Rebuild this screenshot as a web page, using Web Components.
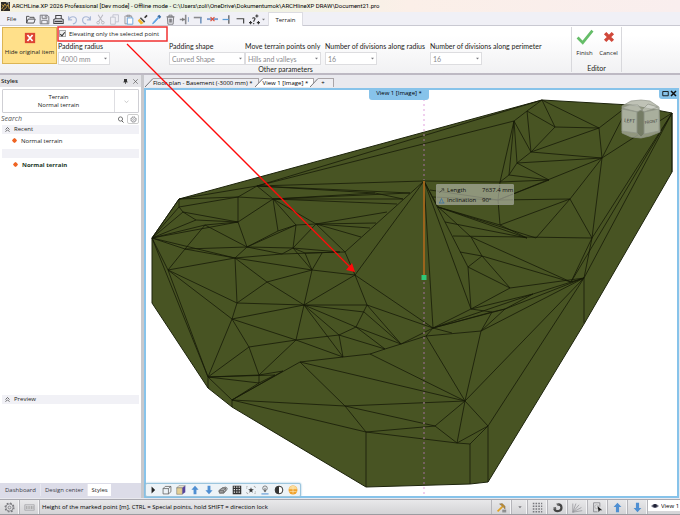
<!DOCTYPE html>
<html lang="en">
<head>
<meta charset="utf-8">
<title>ARCHLine.XP 2026 Professional</title>
<style>
html,body{margin:0;height:100%}
body{font:6px/10px "Open Sans","Noto Sans",sans-serif;color:#1c1c20;background:#e9e9ee;display:flex;flex-direction:column}
</style>
</head>
<body>
<app-window></app-window>
<script>
const BASE = `*{box-sizing:border-box}
button,select,input{font:inherit;color:inherit;margin:0;padding:0;border:0;background:none;border-radius:0;outline:0}
button{cursor:pointer}svg{display:block}`;

function define(name, css, html, after) {
  const t = document.createElement('template');
  t.innerHTML = `<style>${BASE}${css}</style>${html}`;
  customElements.define(name, class extends HTMLElement {
    constructor() {
      super();
      this.attachShadow({mode: 'open'}).append(t.content.cloneNode(true));
    }
    connectedCallback() { if (after) after(this, this.shadowRoot); }
  });
}

const S = (c, w = 1) => `fill="none" stroke="${c}" stroke-width="${w}"`;
const ARROW_UP = '<path d="M7 1 12 6.5H9V13H5V6.5H2Z" fill="#4f8fd2"/>';
const ICONS = {
  logo: '<rect width="14" height="14" fill="#2d2b28"/><path d="M1 11 6 3l3 4 2-3 2 7M1 4l4 3M3 13l6-5" fill="none" stroke="#c39a43" stroke-width="1.5"/><path d="M8 1h4v3" fill="none" stroke="#eee"/>',
  open: `<path d="M2 11.5V3H5l1 1.2h5.500V6M2 11.500 4 6.500h9L11.300 11.500Z" ${S('#4a4a4e', 1.2)}/>`,
  save: `<path d="M1.500 1.500H10.500L12.500 3.500V12.500H1.500Z" ${S('#77777c', 1.2)}/><path d="M4 1.500V5.500H10V1.500M3.500 12.500V8H10.500V12.500M8 2v2.500" ${S('#77777c', 1.2)}/>`,
  print: `<path d="M3.500 6V2H10.500V6M1 12V7L3 6H11L13 7V12Z" ${S('#444448', 1.3)}/><path d="M2 9.500H12" ${S('#444448', 2)}/>`,
  undo: `<path d="M2 3V7.500H6.500M2.500 7C4 2.500 11.500 2 12 7.500 12 10 10 12 7.500 12.500" ${S('#a9b8d6', 1.5)}/>`,
  redo: `<path d="M12 3V7.500H7.500M11.500 7C10 2.500 2.500 2 2 7.500 2 10 4 12 6.500 12.500" ${S('#a9b8d6', 1.5)}/>`,
  cut: `<path d="M4 1 9.500 10M10 1 4.500 10" ${S('#b9b9c0', 1.3)}/><circle cx="4" cy="11" r="1.700" ${S('#b9b9c0', 1.2)}/><circle cx="10" cy="11" r="1.700" ${S('#b9b9c0', 1.2)}/>`,
  copy: `<path d="M2 4H8V13H2ZM5 4V1H12V10H8" ${S('#c2c5cf', 1.2)}/>`,
  paste: `<path d="M3 2.500H11V6M6 12.500H2.500V2.500M5 1.500H9V3.500H5Z" ${S('#8a8a8e', 1)}/><path d="M5.500 5H12.500V13H5.500Z" fill="#fff" stroke="#6fa8dc" stroke-width="1.200"/>`,
  brush: '<path d="M9 4 12 1 13.500 2.500 10.500 5.500Z" fill="#333"/><path d="M5 4 10.500 9.500 9 11 3.500 5.500Z" fill="#4d4d4d"/><path d="M3 6 8.500 11.500 5 13.500 1 8.500Z" fill="#f0b429"/>',
  pipette: '<path d="M8 3 10.500 1 13 3.500 11 6Z" fill="#3b6ea5"/><path d="M8.500 4.500 9.500 5.500 4 11.500 2 12.500 3 10.500Z" fill="#5aa1e3" stroke="#5aa1e3"/>',
  trash: `<path d="M3 4H11L10.300 13H3.700ZM2 3.500H12M5 3V1.500H9V3M5.500 6V11M7 6V11M8.500 6V11" ${S('#6f6f74', 1.1)}/>`,
  jn1: `<path d="M8.500 1V13M1 7H8.500" ${S('#8a8a8e', 2)}/><path d="M12 4V10" ${S('#6f93bd', 1)}/><path d="M4 4.500 7 7 4 9.500" fill="#777"/>`,
  jn2: `<path d="M1 4.500H11" ${S('#8a8a8e', 2)}/><path d="M10 4V12" ${S('#6f93bd', 2)}/>`,
  jn3: `<path d="M0 6.500H14" ${S('#7d9dcc', 2.4)}/><path d="M4.500 4 9.500 9M9.500 4 4.500 9" ${S('#e0523f', 1.600)}/>`,
  jn4: `<path d="M10 1.500V12.500" ${S('#444', 1.4)}/><path d="M2 7H10" ${S('#5a9bd5', 1.6)}/>`,
  jn5: `<path d="M2 6H11V12" ${S('#444', 1.5)}/>`,
  jn6: `<path d="M8 2.500H12M10 .500V4.500M0 11H4M2 9V13M10 11H14M12 9V13M4.500 6C5 4 8 4.500 7.500 6.500 7 8 6 8 6 10M6 11.500V13" ${S('#333', 1.4)}/>`,
  tri: '<path d="M3 5H11L7 10Z" fill="#77777c"/>',
  hide: '<rect x="1" y="1" width="12" height="12" fill="#dd4433"/><path d="M4 3.500 10 10.500M10 3.500 4 10.500" fill="none" stroke="#fff" stroke-width="2"/>',
  check: '<path d="M.500 7.500 5 12 13.500 1.500" fill="none" stroke="#65bd68" stroke-width="2.400"/>',
  cross: '<path d="M2.500 2.500 11.500 11.500M11.500 2.500 2.500 11.500" fill="none" stroke="#d0483a" stroke-width="4"/>',
  pin: `<path d="M4 2H10V8H4Z" fill="#333"/><path d="M2.500 8H11.500M7 8V12" ${S('#333', 1.4)}/>`,
  close: `<path d="M2.500 2.500 11.500 11.500M11.500 2.500 2.500 11.500" ${S('#555', 1.3)}/>`,
  closeb: `<path d="M2 2 12 12M12 2 2 12" ${S('#111', 3)}/>`,
  maxi: `<path d="M1.500 3H12.500V11.500H1.500Z" ${S('#111', 1.800)}/>`,
  chev: `<path d="M3 5.500 7 9 11 5.500" ${S('#aaa', 1.2)}/>`,
  search: `<circle cx="7" cy="6" r="4.200" ${S('#444', 1.4)}/><path d="M9.500 9.500 13 13" ${S('#444', 1.8)}/>`,
  gear: `<circle cx="7" cy="7" r="4.600" ${S('#77777c', 1)}/><circle cx="7" cy="7" r="1.800" ${S('#77777c', 1)}/><circle cx="7" cy="7" r="5.600" ${S('#77777c', 1.6)} stroke-dasharray="2.200 2.200"/>`,
  fold: `<path d="M3 7 7 3 11 7M3 11.500 7 7.500 11 11.500" ${S('#333', 1.4)}/>`,
  dot: '<path d="M7 0 11 3 14 7 11 11 7 14 3 11 0 7 3 3Z" fill="#ef6423"/>',
  play: '<path d="M5 2 10 7 5 12Z" fill="#222"/>',
  cube: `<path d="M1.500 5H9V12.500H1.500ZM1.500 5 4.500 2H12.500L9 5M12.500 2V9.500L9 12.500" ${S('#555', 1)}/>`,
  box: '<path d="M1 4 4 1H13L9 4Z" fill="#f4efd8" stroke="#555" stroke-width=".600"/><path d="M1 4H9V13H1Z" fill="#e3cf94" stroke="#555" stroke-width=".600"/><path d="M9 4 13 1V10L9 13Z" fill="#55439c"/>',
  up: ARROW_UP,
  down: `<g transform="rotate(180 7 7)">${ARROW_UP}</g>`,
  orbit: `<path d="M2 8 6 4H11L8 8ZM2 8V11.500H8V8M8 11.500 11 8V4" fill="#aaa" stroke="#555"/><ellipse cx="7" cy="7" rx="6.500" ry="3" transform="rotate(-25 7 7)" ${S('#777', 1)}/>`,
  checker: '<path d="M1 1H13V13H1Z" fill="#333"/><path d="M2.500 3H13M2.500 6.500H13M2.500 10H13" stroke="#eee" stroke-width="1.700" stroke-dasharray="1.700 1.700"/>',
  star: '<path d="M7 3 8 6H11L8.500 8 9.500 11 7 9 4.500 11 5.500 8 3 6H6Z" fill="#333"/><path d="M1 5V2H3M11 2H13V5M13 9V12H11M3 12H1V9" fill="none" stroke="#888" stroke-dasharray="1.500 1"/>',
  lamp: `<circle cx="7" cy="4.500" r="3.200" ${S('#555', 1)}/><path d="M7 4V10M5.500 8.500H8.500" ${S('#555', 1.2)}/><path d="M2 12.500H12" ${S('#4f8fd2', 1.400)}/>`,
  contrast: `<circle cx="7" cy="7" r="5.400" fill="#fff" stroke="#333" stroke-width="1.400"/><path d="M7 1.600A5.400 5.400 0 0 0 7 12.400Z" fill="#333"/>`,
  ball: '<circle cx="7" cy="7" r="6.200" fill="#f0a12b"/><path d="M1.500 6H12.500A5.500 5 0 0 0 1.500 6Z" fill="#fbd994"/><path d="M7 1V12M2 9H12" stroke="#fde9bf" stroke-width=".900"/>',
  keys: `<path d="M1 3.500H13V10.500H1Z" ${S('#a5a5aa', 1)}/><path d="M3 5V9M5.200 5V9M7.400 5V9M9.600 5V9M11.500 5V9" ${S('#999', 1)}/>`,
  hammer: '<path d="M2 12 8.500 5.500" stroke="#e0a126" stroke-width="2.200"/><path d="M4.500 2.500 8 2 11.500 5.500V9L9.500 6.500 7 4.500Z" fill="#c48f2c" stroke="#6a6258" stroke-width=".600"/><path d="M8 10.500H13M8 12.500H13" stroke="#555"/>',
  grid: '<g stroke="#77777c" stroke-width="2" stroke-dasharray="2 1.500"><path d="M1 2H13M1 5.500H13M1 9H13M1 12.500H13"/></g>',
  magnet: '<path d="M8 3C13 3 13.500 10.500 8.500 11.500 5.500 12 3.500 10.500 3 8.500" fill="none" stroke="#444" stroke-width="2.800"/><path d="M5.500 2 9 1.500V5L6.500 4.500ZM1.500 7 5 6.500 5.500 9 2.500 9.500Z" fill="#666"/>',
  fan: `<path d="M1 13V2M1 13 5 2M1 13 9 3.500M1 13 12 7M1 13 13 11" ${S('#98989d', 1)}/>`,
  page: `<path d="M10 6V1H2V12.500H7" ${S('#88888d', 1.1)}/><circle cx="6" cy="6" r="2.500" ${S('#aaa', 1)}/><path d="M7 5 13 10.500 10 10.500 8.500 13Z" fill="#222"/>`,
  eye: '<path d="M0 7Q7 0 14 7 7 14 0 7Z" fill="#6d6f80"/><circle cx="7" cy="6.500" r="3.200" fill="#1f2036"/>',
  len: `<path d="M3 11 11 4M7 3.500H11.500V8" ${S('#222', 1.1)}/>`,
  inc: `<path d="M2 12H13M3 12 7 3 11 12" ${S('#2d6aa8', 1.3)}/>`
};

customElements.define('ui-icon', class extends HTMLElement {
  constructor() { super(); this.attachShadow({mode: 'open'}); }
  connectedCallback() {
    this.shadowRoot.innerHTML = `<style>:host{display:inline-block;width:10px;height:10px;flex:none}svg{display:block;width:100%;height:100%}</style>
      <svg viewBox="0 0 14 14" aria-hidden="true">${ICONS[this.getAttribute('name')] || ''}</svg>`;
  }
});
const btn = (n, label) => `<button aria-label="${label}"><ui-icon name="${n}"></ui-icon></button>`;

define('title-bar', `
:host{display:flex;align-items:center;gap:2px;height:12px;padding-left:1px;font-family:Roboto,sans-serif;color:#000;
background:linear-gradient(90deg,#f6f1e0,#e9f3e2 25%,#f3f2e4 45%,#fbefe8 60%,#f9eeee)}
ui-icon{width:9px;height:9px}`,
`<ui-icon name="logo"></ui-icon><span><slot></slot></span>`);

define('quick-bar', `
:host{display:flex;height:14px;background:#f0f0f6;border-bottom:1px solid #c9c9d2}
nav{display:flex;width:100%}
.file{width:23px}
button{width:14px;height:14px;display:grid;place-items:center}
ui-icon{width:11px;height:11px}
.drop{width:3px}.drop ui-icon{width:5px;height:5px}
.tab{width:35px;height:14px;margin-left:4px;background:#fff;border:1px solid #dcdce2;border-bottom:0}`,
`<nav><button class="file">File</button>
${[['open','Open'],['save','Save'],['print','Print'],['undo','Undo'],['redo','Redo'],['cut','Cut'],['copy','Copy'],['paste','Paste'],['brush','Match'],['pipette','Pick'],['trash','Delete'],['jn1','Extend'],['jn2','Corner'],['jn3','Break'],['jn4','Trim'],['jn5','Join'],['jn6','Points']].map(a => btn(...a)).join('')}
<button class="drop" aria-label="More"><ui-icon name="tri"></ui-icon></button><button class="tab">Terrain</button></nav>`);

define('ribbon-field', `
:host{display:flex;flex-direction:column;gap:1px;align-items:flex-start;white-space:nowrap;font:7px/10px Lato,sans-serif}
.box{display:flex;position:relative;width:var(--w,52px);height:13px;border:1px solid #dddde0;background:#fff;align-items:center}
select{appearance:none;width:100%;padding-left:2px;color:#8a8a8e;opacity:1}
ui-icon{position:absolute;right:1px;width:5px;height:5px;pointer-events:none}`,
`<label for="s"></label><div class="box"><select id="s"><option></option></select><ui-icon name="tri"></ui-icon></div>`,
(el, r) => {
  r.querySelector('label').textContent = el.getAttribute('label');
  r.querySelector('option').textContent = el.getAttribute('value');
});

define('ribbon-bar', `
:host{display:flex;height:49px;background:linear-gradient(#fff 20%,#f1f1f3);border-bottom:2px solid #bdb9c3}
section{display:flex;flex-direction:column;justify-content:space-between;border-right:1px solid #d8d8dc;margin:1px 0}
.params{width:572px}.editor{width:50px}
.row{display:flex;gap:1px;padding-left:2px}
.hide{width:55px;height:37px;background:#ffe08a;border:1px solid #dcb554;white-space:nowrap;display:flex;flex-direction:column;align-items:center;gap:3px;padding-top:4px}
.hide ui-icon{width:12px;height:12px}
.fields{display:grid;grid-template-columns:111px 76px 80px 105px auto;align-content:start;row-gap:1px}
.chk{grid-column:1/-1;display:flex;align-items:center;gap:3px;height:13px;padding-left:1px}
input{appearance:none;width:7px;height:7px;border:1px solid #aaa;background:#eee;display:grid;place-items:center}
input:checked::before{content:"";width:4px;height:2px;border:solid #333;border-width:0 0 1px 1px;transform:rotate(-50deg)}
h2{font:7px/8px Lato,sans-serif;margin:0;text-align:center}
.editor .row{gap:0;padding:2px 0 0;justify-content:center}
.editor button{width:24px;display:flex;flex-direction:column;align-items:center;gap:3px;white-space:nowrap}
.editor ui-icon{width:18px;height:16px}.editor .x{width:12px;height:16px}`,
`<section class="params"><div class="row">
<button class="hide"><ui-icon name="hide"></ui-icon>Hide original item</button>
<div class="fields"><div class="chk"><input type="checkbox" id="e" checked><label for="e">Elevating only the selected point</label></div>
<ribbon-field label="Padding radius" value="4000 mm"></ribbon-field>
<ribbon-field label="Padding shape" value="Curved Shape" style="--w:76px"></ribbon-field>
<ribbon-field label="Move terrain points only" value="Hills and valleys" style="--w:76px"></ribbon-field>
<ribbon-field label="Number of divisions along radius" value="16"></ribbon-field>
<ribbon-field label="Number of divisions along perimeter" value="16"></ribbon-field></div></div>
<h2>Other parameters</h2></section>
<section class="editor"><div class="row"><button><ui-icon name="check"></ui-icon>Finish</button><button><ui-icon class="x" name="cross"></ui-icon>Cancel</button></div><h2>Editor</h2></section>`);

define('style-panel', `
:host{display:flex;flex-direction:column;background:#fff}
header{display:flex;align-items:center;height:12px;padding:0 2px 0 1px;background:#e4e4e8;gap:3px;font-weight:600}
header span{flex:1}header ui-icon{width:7px;height:7px}header button{display:flex}
.pick{display:flex;margin:2px 2px 0 2px;height:24px;border:1px solid #cfcfd4;border-radius:1px;text-align:center;line-height:8px;width:auto}
.pick span{flex:1;align-self:center}.pick i{width:24px;height:22px;border-left:1px solid #dedee2;display:grid;place-items:center}
.pick ui-icon{width:7px;height:7px}
.find{display:flex;align-items:center;height:10px;margin:1px 2px 1px 1px;gap:1px}
.find input{flex:1;min-width:0;font-style:italic;font-size:7px;height:10px}.find input::placeholder{color:#555;opacity:1}
.find button{width:12px;height:10px;display:grid;place-items:center}.find ui-icon{width:7px;height:7px}.find .g{border:1px solid #ccc;border-radius:2px}
h3{font:inherit;margin:0 2px 0 2px;height:9px;line-height:9px;background:#f1f1f6;display:flex;align-items:center;gap:3px;padding-left:2px}
h3 ui-icon{width:7px;height:7px}
.it{display:flex;align-items:center;height:15px;padding:0 0 2px 12px;gap:4px}.it ui-icon{width:5px;height:5px}
.it.b{font-weight:700;color:#1d3a2a;padding:0 0 2px 13px}
.gap{flex:227}.low{flex:81}
nav{display:flex;height:15px;padding:1px 0 2px 1px;background:#dcdce8;color:#3c3c48}
nav button{padding:0 4px;white-space:nowrap}nav button+button{border-left:1px solid #e8e8f0}nav .on{background:#fff;color:#222;padding:0 3px}`,
`<header><span>Styles</span>${btn('pin','Pin')}${btn('close','Close')}</header>
<button class="pick"><span>Terrain<br>Normal terrain</span><i><ui-icon name="chev"></ui-icon></i></button>
<div class="find"><input type="text" placeholder="Search" aria-label="Search"><button aria-label="Find"><ui-icon name="search"></ui-icon></button><button class="g" aria-label="Options"><ui-icon name="gear"></ui-icon></button></div>
<h3><ui-icon name="fold"></ui-icon>Recent</h3>
<div class="it"><ui-icon name="dot"></ui-icon>Normal terrain</div>
<h3></h3><div class="it b"><ui-icon name="dot"></ui-icon>Normal terrain</div>
<div class="gap"></div><h3><ui-icon name="fold"></ui-icon>Preview</h3><div class="low"></div>
<nav><button>Dashboard</button><button>Design center</button><button class="on">Styles</button></nav>`);

/* Mesh vertices on the model canvas, and the edges that join them. */
const V = {
A:[152,238],B:[179,199],b2:[179,207],c1:[257,186],c2:[238,197],c3:[238,222],c4:[273,199],c5:[278,231],c6:[296,225],c7:[183,212],c8:[196,220],c9:[205,225],c10:[316,224],c11:[247,247],c12:[293,248],
P:[424,181],Q:[345,252],R:[355,275],S:[433,328],T:[471,309],U:[468,267],f1:[410,193],f2:[403,199],f3:[397,204],f4:[387,212],f5:[376,223],f6:[370,228],f7:[361,237],f0:[375,193],
W:[542,100],v:[514,121],x1:[527,111],x2:[555,127],x3:[599,128],x4:[531,152],x5:[602,158],x6:[517,163],x7:[509,175],x8:[549,180],x9:[500,182],x10:[570,199],x11:[592,238],x12:[536,238],x13:[527,238],Y:[672,113],Z:[629,105],
p1:[438,207],p2:[445,222],p3:[453,236],p4:[433,197],K:[471,237],k1:[445,213],m1:[498,200],m2:[500,225],m3:[430,190],
E:[584,278],F:[571,282],H:[510,288],I:[533,294],J:[481,331],L:[482,256],M:[460,252],j1:[505,309],j2:[492,312],
N:[312,270],O:[304,305],a:[367,305],a2:[364,312],b:[356,327],c:[401,344],d:[385,349],e:[339,335],f:[343,357],g:[296,340],h:[300,362],i:[370,354],k:[426,336],s1:[452,333],
D:[465,401],G:[488,426],l:[366,432],m:[345,406],n:[435,426],o:[457,443],p:[470,444],q:[232,400],r:[208,377],s:[259,383],t:[259,375],t1:[275,375],t2:[283,371],
u:[168,270],vv:[232,319],w:[237,303],x:[235,258],y:[249,347],z:[267,282],aa:[282,254],y1:[185,249],n1:[305,253],n2:[322,253],n3:[340,252],
B0:[152,303],r0:[208,388],q0:[232,407],l0:[366,487],p0:[470,484],G0:[488,482],E0:[584,323],Y0:[672,172]};
const EDGES = `B-c2 B-c1 b2-c2 B-b2 c2-c3 c2-c1 c1-c4 c2-c4 c3-c4 c4-c5 c4-c6 c4-c10 c3-c7 c3-c8 A-b2 A-c7 A-c8 A-c9 c7-b2 c7-c8 c3-c9 c3-c11 c9-c11 A-B A-c3
c1-W c1-v c1-P c1-f1 c1-f0 c4-f0 c4-f1 c4-f2 c4-f3 f0-f2 c10-f4 c10-f5 c10-f6 c10-f7 P-Q P-R P-S P-T P-U P-p1 P-x9 c10-Q c10-c12 c10-c6 c5-c6 c5-c11 c11-c6
v-x9 v-x7 v-x6 v-x4 v-x1 x1-W x1-x2 x1-x4 W-x2 W-x3 x2-x3 x2-x4 x3-x4 x4-x5 x4-x6 x6-x5 x6-x7 x6-x8 x7-x8 x7-x9 x9-x8 x3-x5 x3-Z x5-Z x5-Y x5-m1 x5-x10 x5-x11 x10-x11 x10-x12 x10-m2 x10-m1 x9-m1 m1-m2 x8-m1 m1-m3 m1-p4
p1-m2 p1-x13 p2-x13 p1-x12 p3-x11 k1-K p1-k1 K-L K-F m2-x13 Y-x11 Y-E Y-F E-x11 F-x11 E-F E-D E-G E-H E-I E-j1 E-J E-E0 Y-Y0
F-L H-L H-U H-T I-T I-S U-T U-L L-M T-j2 j2-j1 J-j1 J-j2 S-j1 S-T S-j2 S-s1 I-j1
Q-R R-N R-O R-a R-S a-O a-S a-b a-c a2-O a2-c b-d b-O b-c b-e O-e e-d e-f e-g f-g f-O h-f f-i i-d d-c c-k c-S k-S k-J k-D J-D i-D h-D h-m m-l D-m D-n D-o D-G m-n l-n n-o l-o o-p o-G p-G p-p0 G-G0 l-l0
q-m q-l q-q0 r-r0 r-q q-h q-s t-s r-t r-s t-t2 s-t1 r-t1 q-t2 A-u u-r A-r u-vv u-w u-x x-w w-vv vv-r vv-y y-r y-t y-g vv-g vv-O w-O g-t g-O w-z z-x z-N z-O O-N x-N x-aa aa-c12 A-x A-y1 u-y1 y1-c9 y1-c11 y1-x x-c11 c11-c12 c12-c6 c12-N c12-n1 n1-N c12-n3 N-n2 aa-n3 n1-Q c11-aa`;
const edgePath = EDGES.trim().split(/\s+/).map(s => { const [a, b] = s.split('-'); return `M${V[a]}L${V[b]}`; }).join('');

define('terrain-model', `
:host{display:block;min-height:0}svg{width:100%;height:100%}text{font:5px "Open Sans",sans-serif;fill:#333}`,
`<svg viewBox="146 90 531 406" role="img" aria-label="Terrain">
<path d="M152 238 179 199 542 100 630 105 672 113V172L624 255 584 324 538 400 488 482 470 484 366 487 232 407 208 388 152 303Z" fill="#485423" stroke="#1d240c" stroke-width="1"/>
<path d="${edgePath}" fill="none" stroke="#161b08" stroke-width=".800"/>
<path d="M424 99V131" stroke="#f0d0ee" stroke-width="2" stroke-dasharray="2 3"/>
<path d="M424 134V180M424 282V485" stroke="#75625f" stroke-width="2" stroke-dasharray="2 3"/>
<path d="M424 487V496" stroke="#f0d0ee" stroke-width="2" stroke-dasharray="2 3"/>
<path d="M424 181V275" stroke="#9a641c" stroke-width="2"/><rect x="421.500" y="275" width="5" height="5" fill="#2fc878"/>
<g stroke="#90958a" stroke-width=".700"><path d="M622 106 631 101 641 100 650 101 659 107 660 132 650 136 641 138 631 137 622 133Z" fill="#a9ae9e" fill-opacity=".750"/>
<path d="M622 108 629 105H638L642 110 638 112ZM642 110 648 104 658 107 644 112Z" fill="#d5d8d2" fill-opacity=".500"/>
<path d="M622 109 637 112V133L622 131ZM644 112 659 109V131L644 134Z" fill="#a9af9d"/><path d="M637 112 641 110 644 112V134L641 137 637 133Z" fill="#757c65"/></g>
<text x="624" y="122" transform="rotate(6 624 122)">LEFT</text><text x="645" y="124" transform="rotate(-8 645 124)" style="font-size:4px">FRONT</text>
</svg>`);

define('measure-tip', `
:host{display:grid;grid-template-columns:9px 35px auto;align-items:center;width:78px;height:21px;padding:0 1px;line-height:10px;background:rgba(190,194,180,.6);border:1px solid #8d927f;border-radius:1px;color:#0c0c0c;white-space:nowrap}
ui-icon{width:7px;height:7px}`,
`<ui-icon name="len"></ui-icon><span>Length</span><span>7637.4 mm</span><ui-icon name="inc"></ui-icon><span>Inclination</span><span>90°</span>`);

define('doc-tab', `
:host{display:flex;height:9px;line-height:9px;color:#000;margin-right:-4px}
svg{width:8px;height:9px;flex:none}
button{border-top:1px solid #aaa5a8;border-right:1px solid #aaa5a8;height:9px;line-height:8px;padding:0 5px 0 0;white-space:nowrap;background:var(--bg,#eeeef2)}`,
`<svg viewBox="0 0 8 9"><path d="M0 9 8 .500V9Z" style="fill:var(--bg,#eeeef2)"/><path d="M0 9 8 .500" stroke="#77777a"/></svg><button><slot></slot></button>`);

define('doc-view', `
:host{display:flex;flex-direction:column;min-width:0;padding-right:1px;background:#e9e9ee}
.tabs{display:flex;height:13px;padding:3px 0 1px 1px}
.view{position:relative;flex:1;min-height:0;border:2px solid #87c3ea;background:#fff}
terrain-model{position:absolute;inset:0}
.name{position:absolute;left:42%;top:-2px;width:60px;height:12px;line-height:11px;background:#87c3ea;border-radius:0 0 3px 3px;text-align:center;color:#000}
.win{position:absolute;right:-2px;top:-1px;display:flex;gap:1px;background:#87c3ea;padding:1px 2px 2px 3px;border-radius:0 0 0 3px}
.win ui-icon{width:7px;height:7px}.win button{display:flex}
measure-tip{position:absolute;left:290px;top:94px}
.tools{position:absolute;left:-1px;bottom:-1px;height:14px;display:flex;background:#edf3f7;border:1px solid #9cc5dd;border-radius:2px;box-shadow:0 0 2px #82b6d6}
.tools button{width:14px;display:grid;place-items:center}`,
`<div class="tabs"><doc-tab>Floor plan - Basement (-3000 mm) *</doc-tab><doc-tab style="--bg:#fff">View 1 [Image] *</doc-tab><doc-tab>&nbsp; + &nbsp;</doc-tab></div>
<div class="view"><terrain-model></terrain-model><div class="name">View 1 [Image] *</div>
<div class="win">${btn('maxi','Maximize')}${btn('closeb','Close')}</div><measure-tip></measure-tip>
<div class="tools">${['play','cube','box','up','down','orbit','checker','star','lamp','contrast','ball'].map(n => btn(n, n)).join('')}</div></div>`);

define('status-bar', `
:host{display:flex;height:16px;background:linear-gradient(#e8e8ea,#d3d3d6);border-top:1px solid #a9a9b0;border-bottom:1px solid #9b9ba0;color:#000}
button{height:100%;width:20px;display:grid;place-items:center;border-right:1px solid #b5b5ba;box-shadow:inset -1px 0 #f4f4f6}
ui-icon{width:11px;height:11px}
.msg{flex:1;align-self:center;padding-left:2px;white-space:nowrap}
.r{border-left:1px solid #b5b5ba;display:flex}.n{width:16px}.n ui-icon{width:6px;height:6px}
label{display:flex;align-items:center;gap:2px;background:#fff;width:32px;padding-left:3px;margin-bottom:3px}
label ui-icon{width:8px;height:8px}select{appearance:none;width:19px;font-size:6px}`,
`${btn('gear','Settings')}${btn('keys','Keyboard')}<span class="msg">Height of the marked point [m], CTRL = Special points, hold SHIFT = direction lock</span>
<div class="r">${btn('hammer','Tools')}<button class="n" aria-label="More"><ui-icon name="tri"></ui-icon></button>${btn('grid','Grid')}${btn('magnet','Snap')}${btn('fan','Angles')}${btn('page','Select')}${btn('up','Up')}${btn('down','Down')}
<label><ui-icon name="eye"></ui-icon><select aria-label="View"><option>View 1</option></select></label></div>`);

define('call-out', `
:host{position:absolute;inset:0;pointer-events:none}svg{width:100%;height:100%}`,
`<svg viewBox="0 0 680 515" preserveAspectRatio="none"><rect x="58" y="27" width="109" height="14" fill="none" stroke="#f03030" stroke-width="1.500"/>
<path d="M127 44 351 268" stroke="#ff0a0a" stroke-width="1.300"/><path d="M355 272 346 270 352 263Z" fill="#ff0a0a"/></svg>`);

define('app-window', `
:host{display:flex;flex-direction:column;flex:1;position:relative;min-height:0;overflow:hidden}
main{flex:1;min-height:0;display:grid;grid-template-columns:141px 3px minmax(0,1fr);padding-bottom:1px}
i{background:#c8c8cc}`,
`<title-bar>ARCHLine.XP 2026 Professional [Dev mode] - Offline mode - C:\\Users\\zoli\\OneDrive\\Dokumentumok\\ARCHlineXP DRAW\\Document21.pro</title-bar>
<quick-bar></quick-bar><ribbon-bar></ribbon-bar>
<main><style-panel></style-panel><i></i><doc-view></doc-view></main>
<status-bar></status-bar><call-out></call-out>`);
</script>
</body>
</html>
